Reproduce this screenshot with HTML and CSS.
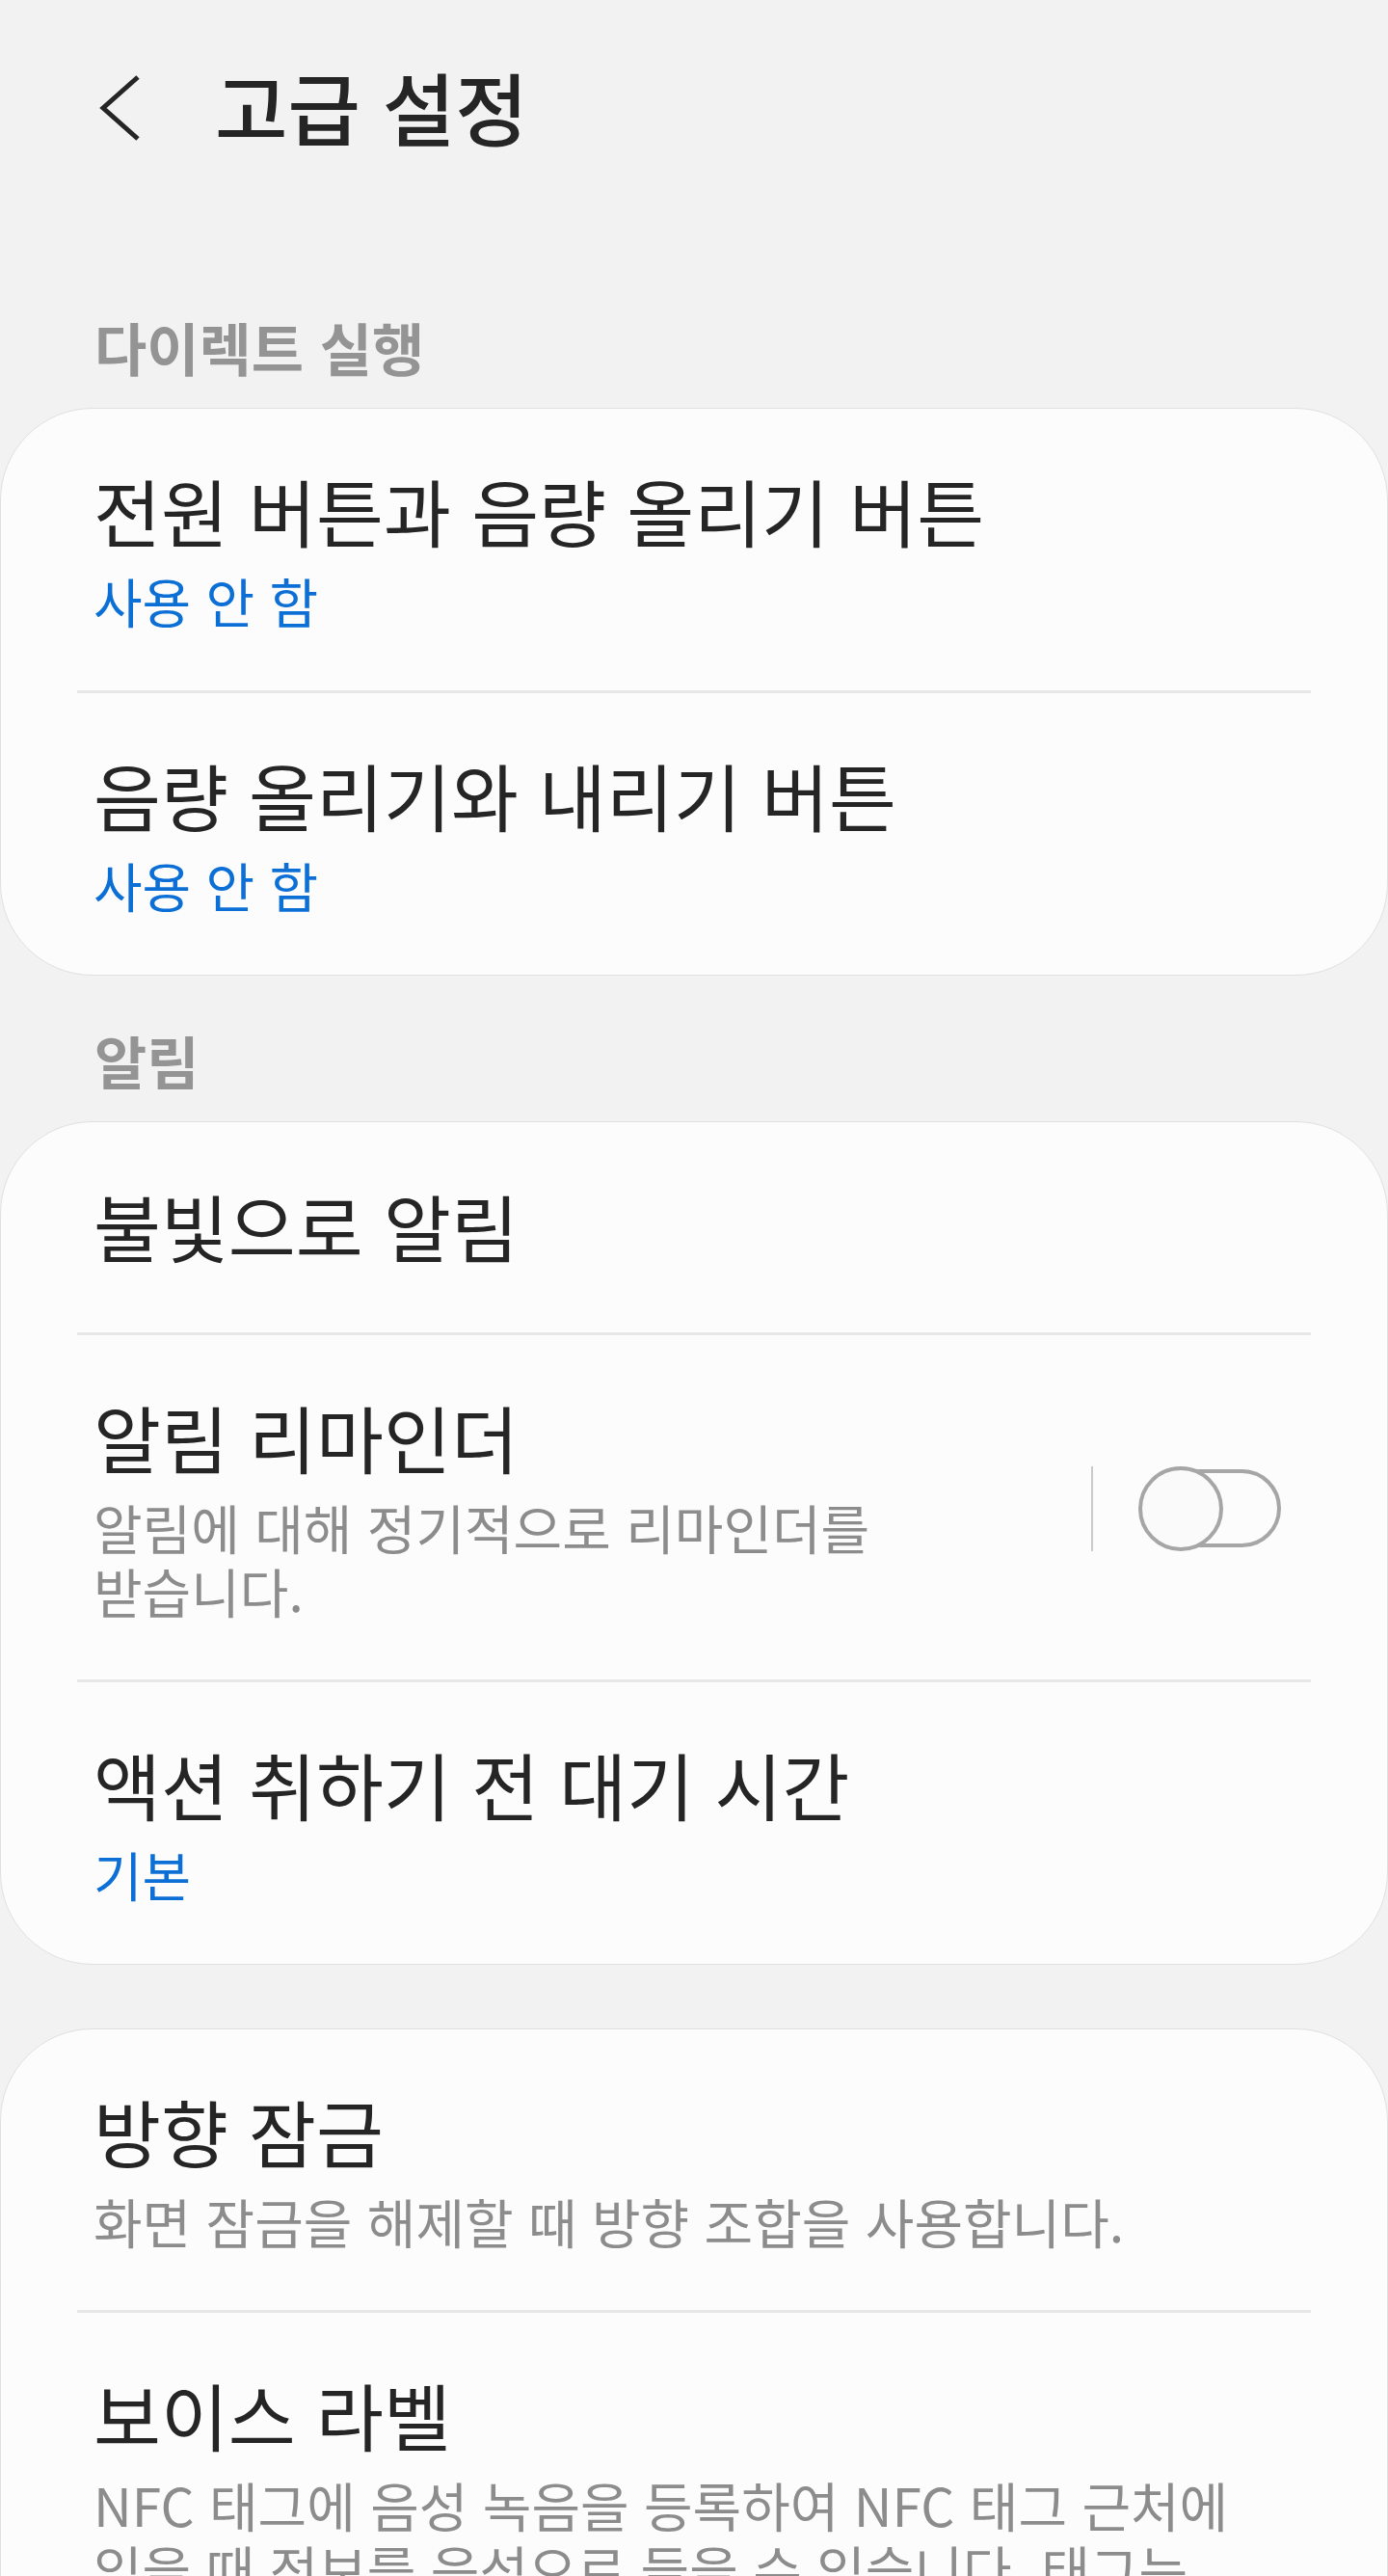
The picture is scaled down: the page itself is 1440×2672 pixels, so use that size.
FILE: index.html
```html
<!DOCTYPE html>
<html lang="ko">
<head>
  <meta charset="UTF-8">
  <title>고급 설정</title>
  <link rel="stylesheet" href="styles.css">
</head>
<body>

<div class="appbar">
  <svg class="back" width="44" height="70" viewBox="0 0 44 70">
    <polyline points="40,3 4,35 40,67" fill="none" stroke="#252525" stroke-width="5"/>
  </svg>
  <h1>고급 설정</h1>
</div>

<h2 class="section-title">다이렉트 실행</h2>
<div class="card">
  <div class="row">
    <div class="title">전원 버튼과 음량 올리기 버튼</div>
    <div class="sub">사용 안 함</div>
  </div>
  <div class="divider"></div>
  <div class="row">
    <div class="title">음량 올리기와 내리기 버튼</div>
    <div class="sub">사용 안 함</div>
  </div>
</div>

<h2 class="section-title">알림</h2>
<div class="card">
  <div class="row single">
    <div class="title">불빛으로 알림</div>
  </div>
  <div class="divider"></div>
  <div class="row switch-row">
    <div class="text">
      <div class="title">알림 리마인더</div>
      <div class="desc">알림에 대해 정기적으로 리마인더를 받습니다.</div>
    </div>
    <span class="vline"></span>
    <svg class="switch" width="150" height="88" viewBox="0 0 150 88">
      <rect x="8" y="5" width="138" height="77" rx="38.5" fill="none" stroke="#a6a6a6" stroke-width="4"/>
      <circle cx="44" cy="44" r="42" fill="#fafafa" stroke="#a6a6a6" stroke-width="4"/>
    </svg>
  </div>
  <div class="divider"></div>
  <div class="row">
    <div class="title">액션 취하기 전 대기 시간</div>
    <div class="sub">기본</div>
  </div>
</div>

<div class="card spaced">
  <div class="row">
    <div class="title">방향 잠금</div>
    <div class="desc">화면 잠금을 해제할 때 방향 조합을 사용합니다.</div>
  </div>
  <div class="divider"></div>
  <div class="row">
    <div class="title">보이스 라벨</div>
    <div class="desc">NFC 태그에 음성 녹음을 등록하여 NFC 태그 근처에 있을 때 정보를 음성으로 들을 수 있습니다. 태그는 쓰기 가능한 NFC 태그여야 합니다.</div>
  </div>
</div>

</body>
</html>
```

FILE: styles.css
```css
* { box-sizing: border-box; }
body {
  margin: 0;
  background: #f2f2f2;
  font-family: "Noto Sans CJK KR", "Noto Sans", sans-serif;
  color: #252525;
  word-break: keep-all;
}
.appbar {
  display: flex;
  align-items: center;
  height: 232px;
  padding-left: 103px;
  margin-bottom: 40px;
}
.back { display: block; margin-top: -8px; }
.appbar h1 {
  margin: 0 0 0 76px;
  padding-bottom: 12px;
  font-size: 82px;
  font-weight: 500;
  line-height: 100px;
}
.section-title {
  margin: 0 0 23px;
  padding: 48px 0 0 98px;
  font-size: 59px;
  font-weight: 700;
  line-height: 80px;
  color: #949494;
}
.card {
  background: #fcfcfc;
  border: 1px solid #e0e0e0;
  border-radius: 96px;
}
.card.spaced { margin-top: 66px; }
.row {
  padding: 63px 108px 60px 96px;
}
.row.single { padding-top: 65px; padding-bottom: 69px; }
.title {
  font-size: 76px;
  line-height: 84px;
}
.sub {
  margin-top: 17px;
  font-size: 55px;
  line-height: 68px;
  color: #0c6fd6;
}
.desc {
  margin-top: 18px;
  max-width: 1250px;
  font-size: 55px;
  line-height: 66px;
  color: #8c8c8c;
}
.divider {
  height: 3px;
  margin: 0 79px;
  background: #e7e7e7;
}
.switch-row {
  display: flex;
  align-items: center;
}
.switch-row .text { flex: 1; }
.vline {
  width: 2px;
  height: 88px;
  margin: 0 47px 0 50px;
  background: #c9c9c9;
}
.switch { display: block; flex-shrink: 0; }
```
